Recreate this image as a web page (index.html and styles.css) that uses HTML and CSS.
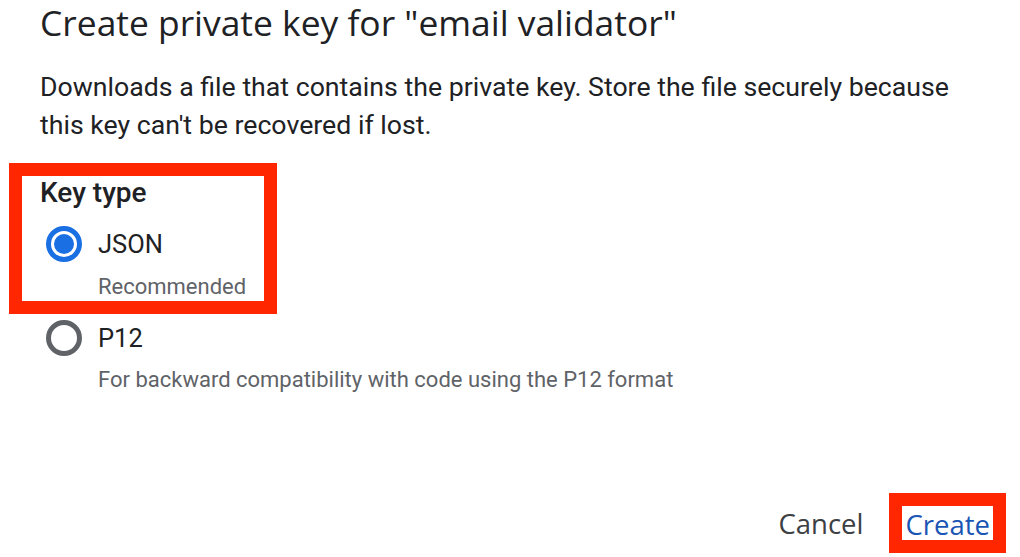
FILE: index.html
```html
<!DOCTYPE html>
<html lang="en">
<head>
  <meta charset="UTF-8">
  <title>Create private key</title>
  <link rel="stylesheet" href="styles.css">
</head>
<body>
  <div class="dialog">
    <h1 class="dialog-title">Create private key for "email validator"</h1>
    <p class="dialog-text">Downloads a file that contains the private key. Store the file securely because this key can't be recovered if lost.</p>

    <div class="key-group highlight">
      <div class="group-label">Key type</div>
      <label class="option">
        <span class="radio checked"></span>
        <span class="option-label">JSON</span>
      </label>
      <div class="option-hint">Recommended</div>
    </div>

    <div class="key-group plain">
      <label class="option">
        <span class="radio"></span>
        <span class="option-label">P12</span>
      </label>
      <div class="option-hint">For backward compatibility with code using the P12 format</div>
    </div>

    <div class="actions">
      <button class="btn btn-cancel">Cancel</button>
      <button class="btn btn-create highlight">Create</button>
    </div>
  </div>
</body>
</html>
```

FILE: styles.css
```css
body {
  margin: 0;
  background: #fff;
  font-family: Roboto, "Noto Sans", sans-serif;
  color: #202124;
}

.dialog {
  height: 557px;
  box-sizing: border-box;
  padding: 0 14px 4px 40px;
  display: flex;
  flex-direction: column;
}

.dialog-title {
  margin: 0;
  font-family: "Open Sans", Lato, sans-serif;
  font-weight: 400;
  font-size: 35.4px;
  line-height: 44px;
  color: #202124;
}

.dialog-text {
  margin: 24px 0 0 0;
  font-size: 26.7px;
  line-height: 38px;
  max-width: 940px;
}

/* red annotation frames */
.highlight {
  border: 13px solid #ff2600;
}

.key-group.highlight {
  width: fit-content;
  margin: 19px 0 0 -31px;
  padding: 0 18px 0 18px;
}

.key-group.plain {
  margin-top: 4px;
}

.group-label {
  font-size: 28px;
  font-weight: 500;
  line-height: 34px;
}

.option {
  display: flex;
  align-items: center;
  height: 40px;
  margin-top: 14px;
}

.key-group.plain .option {
  margin-top: 0;
}

.radio {
  width: 26px;
  height: 26px;
  border: 5px solid #5f6368;
  border-radius: 50%;
  margin-left: 6px;
  margin-right: 16px;
  display: flex;
  align-items: center;
  justify-content: center;
}

.radio.checked {
  border-color: #1a6fe3;
}

.radio.checked::after {
  content: "";
  width: 20px;
  height: 20px;
  border-radius: 50%;
  background: #1a6fe3;
}

.option-label {
  font-size: 25.5px;
  color: #202124;
}

.option-hint {
  margin: 9px 0 0 58px;
  font-size: 22px;
  line-height: 28px;
  color: #5f6368;
}

.key-group.plain .option-hint {
  margin-top: 8px;
}

.actions {
  margin-top: auto;
  display: flex;
  justify-content: flex-end;
  align-items: center;
}

.btn {
  background: none;
  border: none;
  font-family: "Open Sans", Lato, sans-serif;
  font-size: 27.5px;
  padding: 0;
  cursor: pointer;
}

.btn-cancel {
  color: #3c4043;
  margin-right: 26px;
}

.btn.btn-create {
  color: #1b55b4;
  height: 60px;
  padding: 0 3px 0 3px;
  border: 13px solid #ff2600;
}
```
